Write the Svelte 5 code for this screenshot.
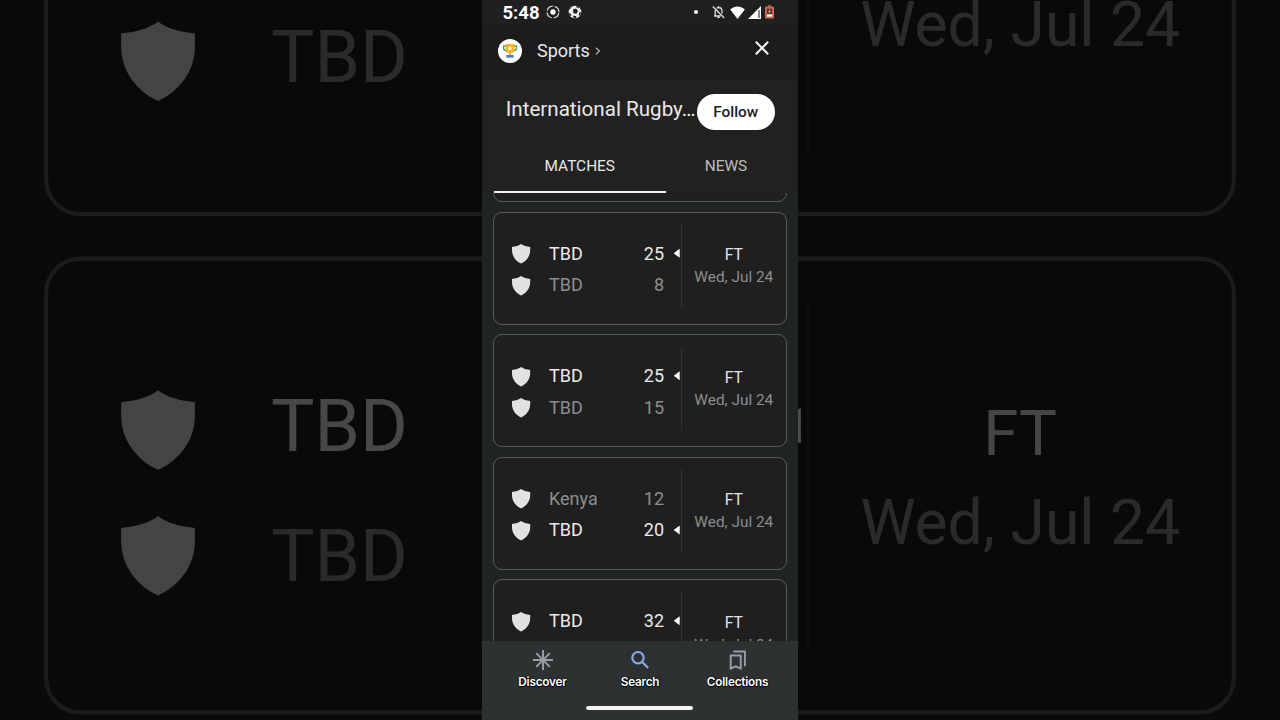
<script lang="ts">
    type Team = { name: string; score?: number; winner?: boolean };

    const matches: Team[][] = [
        [
            { name: "TBD", score: 25, winner: true },
            { name: "TBD", score: 8 },
        ],
        [
            { name: "TBD", score: 25, winner: true },
            { name: "TBD", score: 8 },
        ],
        [
            { name: "TBD", score: 25, winner: true },
            { name: "TBD", score: 15 },
        ],
        [
            { name: "Kenya", score: 12 },
            { name: "TBD", score: 20, winner: true },
        ],
        [
            { name: "TBD", score: 32, winner: true },
            { name: "TBD", score: 8 },
        ],
    ];

    // the phone covers the scores of the enlarged cards
    const enlarged: Team[][] = matches
        .slice(1, 3)
        .map((teams) => teams.map(({ name, winner }) => ({ name, winner })));
</script>

{#snippet matchList(items: Team[][])}
    <div class="stack">
        {#each items as teams}
            <article class="card">
                <div class="teams">
                    {#each teams as team}
                        <div class="team" class:winner={team.winner}>
                            <svg class="shield" viewBox="0 0 18 20" preserveAspectRatio="none">
                                <path d="M9 0C7 1.700 3.500 2.700 0 3V6.500C0 12.500 4 17.800 9 20C14 17.800 18 12.500 18 6.500V3C14.500 2.700 11 1.700 9 0Z" />
                            </svg>
                            <span class="name">{team.name}</span>
                            <span class="score">{team.score ?? ""}</span>
                            <span class="arrow"></span>
                        </div>
                    {/each}
                </div>
                <div class="status">
                    <span class="ft">FT</span>
                    <span>Wed, Jul 24</span>
                </div>
            </article>
        {/each}
    </div>
{/snippet}

<div class="screen">
    <div class="backdrop" aria-hidden="true">
        {@render matchList(enlarged)}
    </div>

    <main class="phone">
        <div class="statusbar">
            <span class="clock">5:48</span>
            <svg width="14" height="14" viewBox="0 0 14 14">
                <circle cx="7" cy="7" r="5.900" fill="none" stroke="#ddd" stroke-width="1.200" stroke-dasharray="7.270 2" stroke-dashoffset="-1" />
                <circle cx="7" cy="7" r="2.700" fill="#fff" />
            </svg>
            <svg class="ball" width="14" height="14" viewBox="0 0 14 14">
                <circle cx="7" cy="7" r="6.300" fill="#eee" />
                <path d="M5 4.500L8 3.500L10 6L8.500 8.800L5.400 8.300ZM1 5L3 3L3.500 1.800L1.500 3.500ZM8 .7L11 2L10.500 3.200L8.500 2.200ZM12 6.500L13 8L11.500 11L10.600 9.500ZM5 10.700L8 11L8.500 12.800L5.500 13ZM.8 8L2.500 8.500L3.500 10.800L2 10.800Z" fill="#1e1e1e" />
            </svg>
            <div class="system">
                <span class="dot"></span>
                <svg class="bell" width="13" height="14" viewBox="0 0 13 14" fill="none" stroke="#ddd" stroke-width="1.300">
                    <path d="M4.500 3.200C5 2.800 5.600 2.500 6.500 2.500C8.700 2.500 10 4.200 10 6.300V8.500M8.500 11H2M3.200 5.200V10.500M6.500 1V2.500M.8 1.500L12.200 13" />
                    <path d="M5.300 12.300H7.700" stroke-width="1.600" />
                </svg>
                <svg class="wifi" width="15" height="13" viewBox="0 0 15 13">
                    <path d="M.2 3.500C4.400-.4 10.600-.4 14.800 3.500L7.500 13Z" fill="#fff" />
                </svg>
                <svg class="signal" width="13" height="13" viewBox="0 0 13 13">
                    <path d="M0 13L13 0V13Z" fill="#fff" />
                    <path d="M11 4V12" stroke="#222" stroke-width="1.100" />
                </svg>
                <svg width="9" height="14" viewBox="0 0 9 14">
                    <path d="M3 .3H6V1.500H8Q9 1.500 9 2.500V12.500Q9 13.500 8 13.500H1Q0 13.500 0 12.500V2.500Q0 1.500 1 1.500H3Z" fill="#cb6758" />
                    <rect x="2" y="3.700" width="5" height="8" fill="#542e28" />
                    <rect x="2" y="9.300" width="5" height="2.400" fill="#fff" />
                    <path d="M4.500 4.700V8M3.300 6.800H5.700" stroke="#e68779" />
                </svg>
            </div>
        </div>

        <header class="appbar">
            <span class="logo">
                <svg width="16" height="16" viewBox="0 0 16 16">
                    <path d="M4 3H1.500V5Q1.500 7.500 5 8M12 3H14.500V5Q14.500 7.500 11 8" fill="none" stroke="#4da45b" stroke-width="1.300" />
                    <path d="M3.500 1H12.500V6Q12.500 9.500 9 10V12H7V10Q3.500 9.500 3.500 6Z" fill="#f3b324" />
                    <path d="M8 2.700L8.800 4.400L10.600 4.600L9.300 5.900L9.600 7.700L8 6.800L6.400 7.700L6.700 5.900L5.400 4.600L7.200 4.400Z" fill="#fff5cf" />
                    <path d="M4.300 12H11.700V14.700H4.300Z" fill="#4c7fdc" />
                </svg>
            </span>
            <span class="section">Sports</span>
            <svg class="chevron" width="6" height="8" viewBox="0 0 6 8" fill="none" stroke="#b4b4b4" stroke-width="1.200">
                <path d="M1 .7L4.400 4L1 7.300" />
            </svg>
            <svg class="close" width="14" height="14" viewBox="0 0 14 14" fill="none" stroke="#f4f4f4" stroke-width="2">
                <path d="M.8 .8L13.200 13.200M13.200 .8L.8 13.200" />
            </svg>
        </header>

        <section class="heading">
            <h1>International Rugby…</h1>
            <button>Follow</button>
        </section>

        <nav class="tabs">
            <span class="tab active">MATCHES</span>
            <span class="tab">NEWS</span>
        </nav>

        <div class="list">
            {@render matchList(matches)}
        </div>

        <footer>
            <div class="nav">
                <div class="item">
                    <svg width="20" height="20" viewBox="0 0 20 20" fill="none" stroke="#9a9fa2" stroke-width="1.900">
                        <path d="M10 0V20M0 10H20M3.200 3.200L16.800 16.800M16.800 3.200L3.200 16.800" />
                    </svg>
                    <span>Discover</span>
                </div>
                <div class="item">
                    <svg width="20" height="20" viewBox="0 0 20 20" fill="none" stroke="#86a9ee" stroke-width="2.200">
                        <circle cx="8" cy="7.700" r="5.700" />
                        <path d="M12 11.800L18.200 18" />
                    </svg>
                    <span>Search</span>
                </div>
                <div class="item">
                    <svg width="20" height="20" viewBox="0 0 20 20" fill="none" stroke="#9a9fa2" stroke-width="1.900">
                        <path d="M2.700 5.500H12.700V18.500L7.700 16.300L2.700 18.500ZM5.300 1.500H16.900V16.300" />
                    </svg>
                    <span>Collections</span>
                </div>
            </div>
            <div class="handle"></div>
        </footer>
    </main>
</div>

<style>
    .screen {
        position: relative;
        width: 1280px;
        height: 720px;
        overflow: hidden;
        background: #000;
        font-family: Roboto, sans-serif;
        color: #e8e8e8;
    }

    /* enlarged, dimmed copy of the list behind the phone */
    .backdrop {
        position: absolute;
        left: 482px;
        top: 0;
        width: 316px;
        height: 720px;
        padding-top: 313.900px;
        box-sizing: border-box;
        transform: translateY(2px) scale(4.053);
        opacity: 0.3;
        background: #1f2324;
    }

    .phone {
        position: relative;
        display: flex;
        flex-direction: column;
        width: 316px;
        height: 720px;
        margin: 0 auto;
        background: #1f2324;
    }

    .statusbar {
        display: flex;
        align-items: center;
        height: 24px;
        padding: 0 24px 0 20.500px;
        box-sizing: border-box;
        background: #1f1f1f;
    }

    .clock {
        width: 43px;
        font-size: 18.500px;
        font-weight: 700;
        line-height: 24px;
        padding-top: 2px;
        color: #fff;
    }

    .ball {
        margin-left: 8px;
    }

    .system {
        display: flex;
        align-items: center;
        margin-left: auto;
    }

    .dot {
        width: 4px;
        height: 4px;
        border-radius: 50%;
        background: #fff;
    }

    .bell {
        margin-left: 13.500px;
    }

    .wifi {
        margin-left: 5.500px;
    }

    .signal {
        margin: 1px 4px 0 3px;
    }

    .appbar {
        display: flex;
        align-items: center;
        height: 56px;
        padding: 0 29px 3px 15.500px;
        box-sizing: border-box;
        background: #1c1c1c;
    }

    .logo {
        display: flex;
        align-items: center;
        justify-content: center;
        width: 24px;
        height: 24px;
        border-radius: 50%;
        background: #fff;
    }

    .section {
        margin-left: 15.500px;
        font-size: 18px;
    }

    .chevron {
        margin: 1px 0 0 5.500px;
    }

    .close {
        margin: 0 0 6px auto;
    }

    .heading {
        display: flex;
        align-items: center;
        justify-content: space-between;
        height: 64px;
        padding: 0 23.500px 1px 23.700px;
        box-sizing: border-box;
        background: #212121;
    }

    h1 {
        width: 190px;
        margin: 0 0 5px;
        font-size: 20.600px;
        font-weight: 400;
        white-space: nowrap;
    }

    button {
        flex: none;
        width: 77.500px;
        height: 36px;
        padding: 0;
        border: 0;
        border-radius: 18px;
        background: #fff;
        color: #202020;
        font: 500 15.400px Roboto, sans-serif;
    }

    .tabs {
        position: relative;
        display: flex;
        height: 49px;
        padding-left: 12px;
        background: #212121;
    }

    .tab {
        width: 121px;
        box-sizing: border-box;
        font-size: 15.400px;
        line-height: 45px;
        text-align: center;
        color: #bdbdbd;
    }

    .active {
        width: 171.500px;
        border-bottom: 2px solid #f1f1f1;
        color: #e8e8e8;
    }

    .list {
        flex: 1;
        min-height: 0;
        margin-top: -1px;
        overflow: hidden;
    }

    .stack {
        display: flex;
        flex-direction: column;
        gap: 9.500px;
        margin: -103px 11px 0 10.700px;
    }

    .backdrop .stack {
        margin-top: -102.500px;
    }

    .card {
        display: grid;
        grid-template-columns: 187.900px 1fr;
        height: 113px;
        flex: none;
        box-sizing: border-box;
        border: 1px solid #5a5a5a;
        border-radius: 9px;
        background: #1f1f1f;
    }

    .teams {
        height: 84px;
        margin-top: 11.500px;
        padding: 13.500px 0 0 18.700px;
        box-sizing: border-box;
        border-right: 1px solid #303030;
    }

    .team {
        display: flex;
        align-items: center;
        height: 31.700px;
        font-size: 18px;
        color: #8d8d8d;
    }

    .winner {
        color: #eaeaea;
    }

    .shield {
        width: 18.200px;
        height: 19.600px;
        margin-top: 1.500px;
        overflow: visible;
        fill: #e2e2e2;
    }

    .name {
        margin: -0.300px 0 0 18.400px;
    }

    .score {
        margin: -0.300px 0 0 auto;
    }

    .arrow {
        width: 6px;
        height: 9px;
        margin: 0 0.900px 0 9.600px;
        clip-path: polygon(0 50%, 100% 0, 100% 100%);
    }

    .winner .arrow {
        background: #fff;
    }

    .status {
        display: flex;
        flex-direction: column;
        align-items: center;
        padding-top: 31.900px;
        font-size: 15.400px;
        line-height: 22.100px;
        white-space: nowrap;
        color: #8d8d8d;
    }

    .ft {
        font-size: 15.700px;
        color: #e4e4e4;
    }

    footer {
        position: relative;
        height: 79px;
        background: #2e3132;
    }

    .nav {
        display: flex;
        justify-content: space-between;
        padding: 9px 12px 0;
    }

    .item {
        display: flex;
        flex-direction: column;
        align-items: center;
        width: 97px;
        gap: 4px;
        color: #fff;
        font: 600 11.800px/16px Inter, sans-serif;
        letter-spacing: -0.250px;
        text-shadow: 0 0 1px #000, 0 1px 1px #000, 1px 0 1px #000;
    }

    .handle {
        width: 107px;
        height: 4px;
        margin: 16px 0 0 104px;
        border-radius: 2px;
        background: #f4f4f4;
    }
</style>
